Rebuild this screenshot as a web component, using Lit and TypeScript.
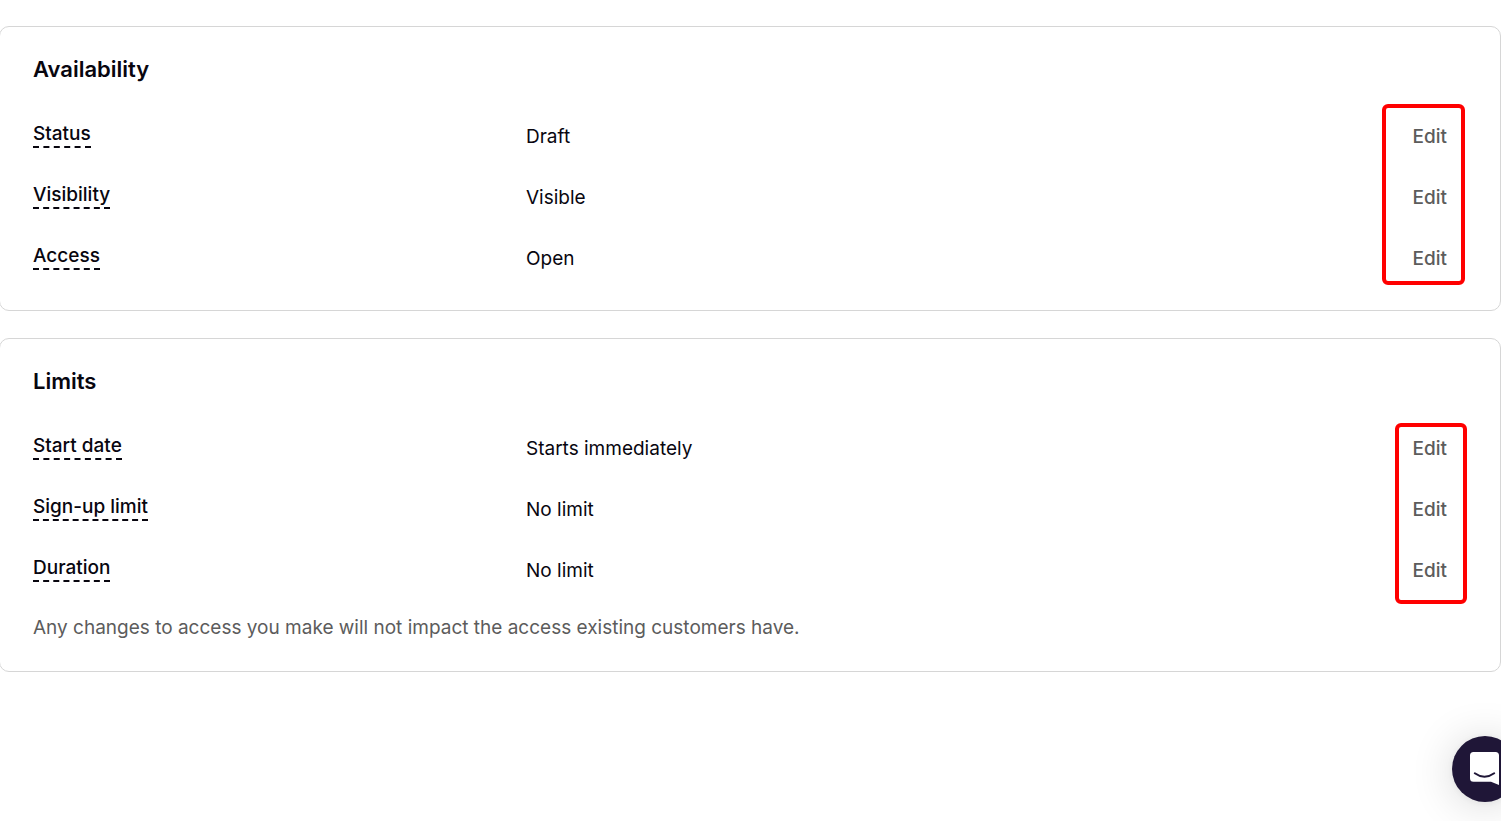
import { LitElement, html, css } from "lit";
import { customElement } from "lit/decorators.js";

interface Row {
  label: string;
  value: string;
}

const availability: Row[] = [
  { label: "Status", value: "Draft" },
  { label: "Visibility", value: "Visible" },
  { label: "Access", value: "Open" },
];

const limits: Row[] = [
  { label: "Start date", value: "Starts immediately" },
  { label: "Sign-up limit", value: "No limit" },
  { label: "Duration", value: "No limit" },
];

@customElement("app-root")
export class AppRoot extends LitElement {
  static styles = css`
    :host {
      display: block;
      min-height: 100vh;
      box-sizing: border-box;
      padding-top: 26px;
      background: #fff;
      color: #08060f;
      font-family: Inter, "Liberation Sans", sans-serif;
      font-size: 19px;
      line-height: 28px;
      overflow-x: hidden;
    }
    main {
      display: grid;
      gap: 27px;
      margin-left: -1px;
    }
    .card {
      box-sizing: border-box;
      border: 1px solid #d6d6d6;
      border-radius: 10px;
      padding: 28px 32px 29px 33px;
      position: relative;
    }
    h2 {
      margin: 0 0 39px;
      font-size: 22px;
      font-weight: 600;
      line-height: 28px;
    }
    .rows {
      display: grid;
      gap: 31px;
      margin: 0;
      padding-bottom: 7px;
    }
    .row {
      display: grid;
      grid-template-columns: 493px 1fr auto;
      align-items: center;
      height: 30px;
    }
    .label {
      justify-self: start;
      align-self: start;
      font-weight: 500;
      line-height: 24px;
      border-bottom: 2px dashed #08060f;
    }
    dd {
      margin: 0;
    }
    button {
      border: 0;
      background: none;
      padding: 0 21px 0 16px;
      font: inherit;
      font-weight: 500;
      color: #5c5c5c;
      cursor: pointer;
    }
    .note {
      margin: 21px 0 0;
      color: #5c5c5c;
    }
    .mark {
      position: absolute;
      box-sizing: border-box;
      border: 4px solid #f00;
      border-radius: 6px;
      height: 181px;
      pointer-events: none;
    }
    .wide {
      top: 77px;
      right: 35px;
      width: 83px;
    }
    .narrow {
      top: 84px;
      right: 33px;
      width: 72px;
    }
    .chat {
      position: fixed;
      right: -17px;
      bottom: 19px;
      width: 66px;
      height: 66px;
      padding: 0;
      border-radius: 50%;
      background: #1f1637;
      box-shadow: 0 1px 8px rgba(0, 0, 0, 0.06), 0 3px 44px rgba(0, 0, 0, 0.16);
    }
    .chat svg {
      display: block;
    }
  `;

  private rows(items: Row[]) {
    return html`<dl class="rows">
      ${items.map(
        (r) => html`<div class="row">
          <dt class="label">${r.label}</dt>
          <dd>${r.value}</dd>
          <dd><button type="button" aria-label="Edit ${r.label}">Edit</button></dd>
        </div>`
      )}
    </dl>`;
  }

  render() {
    return html`
      <main>
        <section class="card">
          <h2>Availability</h2>
          ${this.rows(availability)}
          <div class="mark wide"></div>
        </section>
        <section class="card">
          <h2>Limits</h2>
          ${this.rows(limits)}
          <p class="note">Any changes to access you make will not impact the access existing customers have.</p>
          <div class="mark narrow"></div>
        </section>
      </main>
      <button class="chat" type="button" aria-label="Open chat">
        <svg width="66" height="66" viewBox="0 0 66 66" aria-hidden="true">
          <path d="M21.5 16h22a3.500 3.500 0 0 1 3.500 3.500V49l-8-3.300H21.500a3.500 3.500 0 0 1-3.500-3.500V19.500a3.500 3.500 0 0 1 3.500-3.500z" fill="#fff" />
          <path d="M22.800 37.300q9.700 7 19.400 0" fill="none" stroke="#1f1637" stroke-width="2" stroke-linecap="round" />
        </svg>
      </button>
    `;
  }
}
